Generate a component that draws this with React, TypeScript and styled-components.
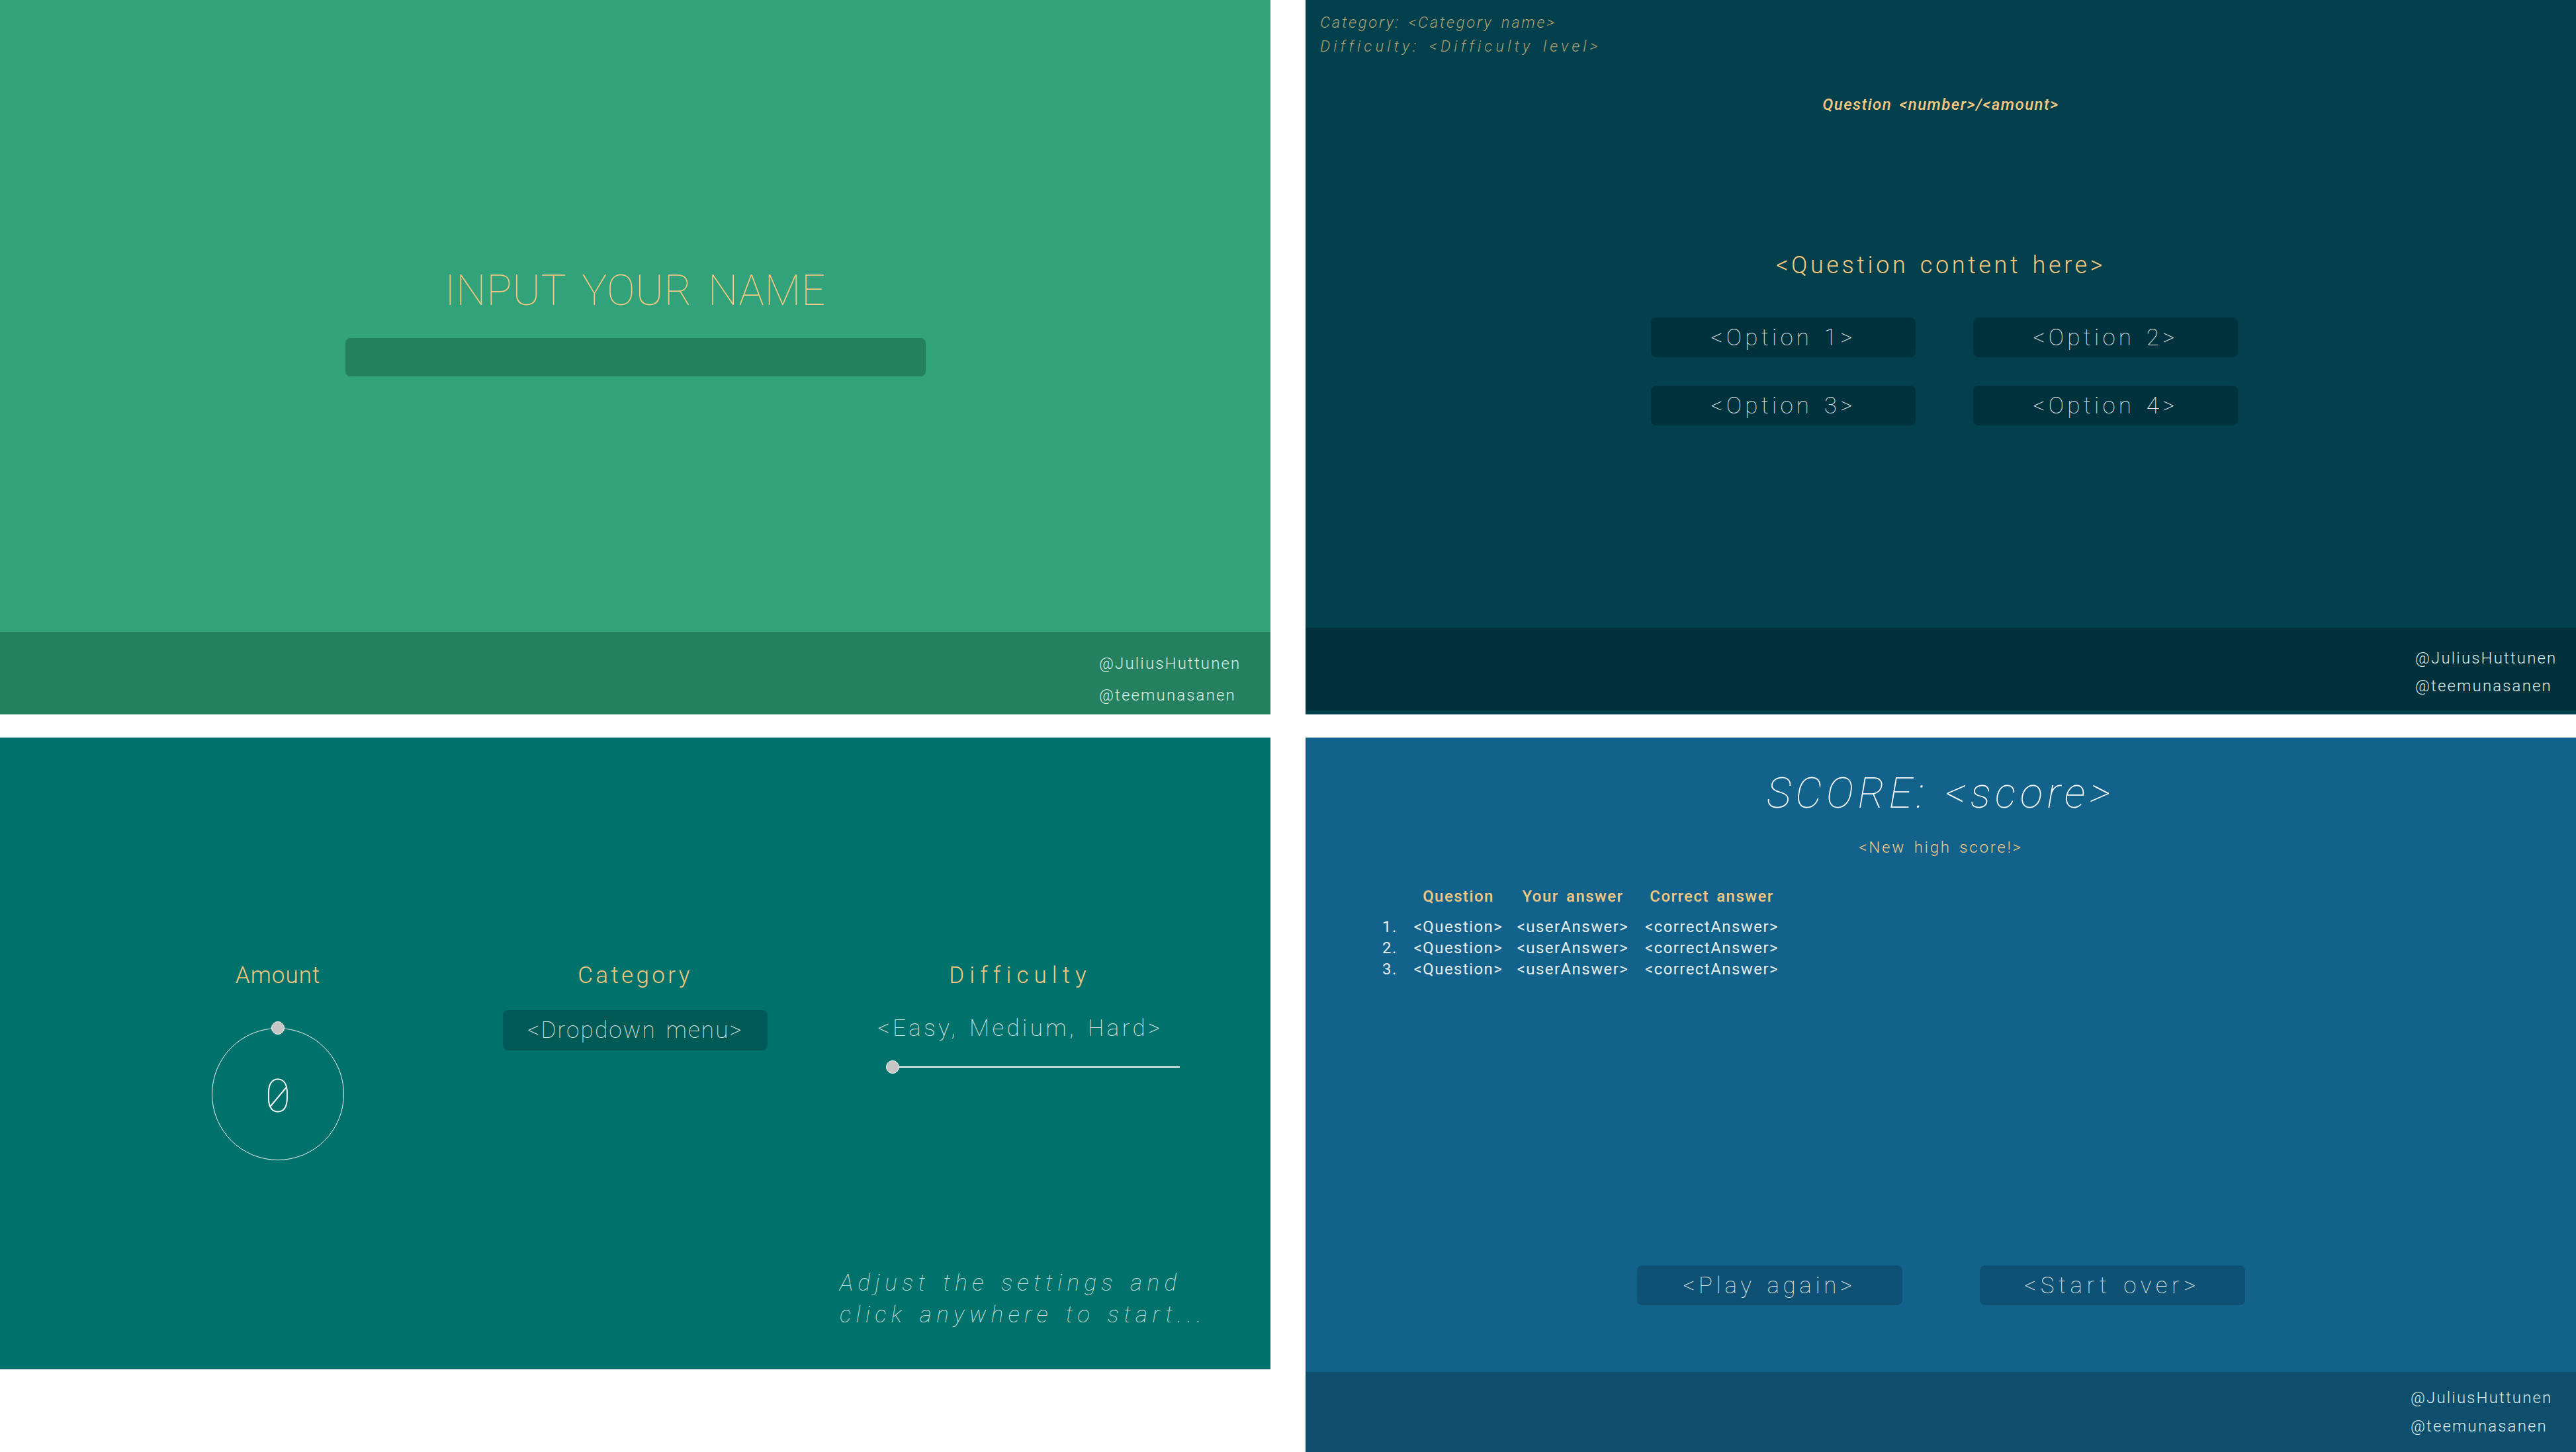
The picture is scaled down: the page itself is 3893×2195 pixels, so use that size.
import styled, { createGlobalStyle } from "styled-components";

const yellow = "#f6c87f";
const light = "#e3eded";

const GlobalStyle = createGlobalStyle`
  html, body {
    margin: 0;
    padding: 0;
    background: #ffffff;
  }
  body {
    font-family: Roboto, "Noto Sans", "Liberation Sans", sans-serif;
    font-weight: 300;
    letter-spacing: 1.6px;
    word-spacing: 4px;
  }
  * {
    box-sizing: border-box;
  }
`;

const Board = styled.div`
  display: grid;
  grid-template-columns: 1920px 1920px;
  grid-template-rows: 1080px 1080px;
  column-gap: 53px;
  row-gap: 35px;
  width: 3893px;
  height: 2195px;
  align-items: start;
`;

const Screen = styled.section<{ $bg: string; $h?: number }>`
  display: flex;
  flex-direction: column;
  height: ${(p) => p.$h ?? 1080}px;
  background: ${(p) => p.$bg};
  overflow: hidden;
`;

const Stage = styled.div<{ $top?: number; $center?: boolean }>`
  flex: 1;
  min-height: 0;
  display: flex;
  flex-direction: column;
  align-items: ${(p) => (p.$center ? "center" : "stretch")};
  padding-top: ${(p) => p.$top ?? 0}px;
`;

const Footer = styled.footer<{ $bg: string; $h: number; $inset: number; $top: number; $lh: number; $below?: number }>`
  flex: none;
  height: ${(p) => p.$h}px;
  margin-bottom: ${(p) => p.$below ?? 0}px;
  background: ${(p) => p.$bg};
  padding: ${(p) => p.$top}px 0 0 ${(p) => p.$inset}px;
  color: #dcebe6;
  font-size: 24px;
  font-weight: 300;
  line-height: ${(p) => p.$lh}px;
  letter-spacing: 0.09em;
`;

const Credits = ({ bg, h, inset, top, lh, below }: { bg: string; h: number; inset: number; top: number; lh: number; below?: number }) => (
  <Footer $bg={bg} $h={h} $inset={inset} $top={top} $lh={lh} $below={below}>
    <div>@JuliusHuttunen</div>
    <div>@teemunasanen</div>
  </Footer>
);

/* ---------- name screen ---------- */

const BigTitle = styled.h1`
  margin: 0;
  font-size: 64px;
  font-weight: 100;
  line-height: 78px;
  color: ${yellow};
  letter-spacing: 0.01em;
  word-spacing: 8px;
`;

const NameField = styled.input`
  margin-top: 32px;
  width: 877px;
  height: 58px;
  border: none;
  border-radius: 8px;
  background: #258060;
  outline: none;
`;

/* ---------- question screen ---------- */

const Meta = styled.div`
  padding: 16px 0 0 22px;
  font-size: 24px;
  line-height: 36px;
  font-style: italic;
  color: #a89e70;
`;

const MetaLine = styled.div<{ $track: number }>`
  letter-spacing: ${(p) => p.$track}em;
`;

const Counter = styled.div`
  margin-top: 52px;
  text-align: center;
  font-size: 24px;
  line-height: 36px;
  font-style: italic;
  font-weight: 500;
  color: ${yellow};
  letter-spacing: 0.06em;
`;

const QuestionText = styled.div`
  margin-top: 201px;
  text-align: center;
  font-size: 36px;
  line-height: 48px;
  color: ${yellow};
  letter-spacing: 0.128em;
`;

const OptionGrid = styled.div`
  margin-top: 55px;
  padding-left: 11px;
  display: grid;
  grid-template-columns: 400px 400px;
  column-gap: 87px;
  row-gap: 43px;
  justify-content: center;
`;

const Tile = styled.div<{ $bg: string; $w?: number; $track?: number }>`
  width: ${(p) => p.$w ?? 400}px;
  height: 60px;
  border-radius: 8px;
  background: ${(p) => p.$bg};
  display: flex;
  align-items: center;
  justify-content: center;
  color: ${light};
  font-size: 35px;
  font-weight: 100;
  letter-spacing: ${(p) => p.$track ?? 0.1}em;
  white-space: nowrap;
`;

/* ---------- settings screen ---------- */

const SettingsRow = styled.div`
  display: grid;
  grid-template-columns: 400px 400px 484px;
  column-gap: 140px;
  padding-left: 220px;
`;

const Setting = styled.div`
  display: flex;
  flex-direction: column;
  align-items: center;
`;

const SettingLabel = styled.div<{ $track: number }>`
  font-size: 35px;
  line-height: 48px;
  color: ${yellow};
  letter-spacing: ${(p) => p.$track}em;
`;

const Dial = styled.div`
  position: relative;
  margin-top: 55px;
  width: 200px;
  height: 200px;
  border: 1.5px solid #eef4f3;
  border-radius: 50%;
  display: flex;
  align-items: center;
  justify-content: center;
`;

const Knob = styled.span<{ $left?: string; $top?: string }>`
  position: absolute;
  left: ${(p) => p.$left ?? "50%"};
  top: ${(p) => p.$top ?? "-11px"};
  width: 20px;
  height: 20px;
  margin-left: -10px;
  border-radius: 50%;
  background: #c6c6c6;
  border: 1px solid #ffffff;
`;

const DialValue = styled.span`
  position: relative;
  top: 3px;
  font-size: 70px;
  font-weight: 100;
  line-height: 1;
  color: #ffffff;
  letter-spacing: 0;

  &::after {
    content: "";
    position: absolute;
    left: 50%;
    top: 50%;
    width: 1.5px;
    height: 38px;
    background: #ffffff;
    transform: translate(-50%, -46%) rotate(40deg);
  }
`;

const Dropdown = styled(Tile)`
  margin-top: 28px;
  height: 61px;
`;

const LevelText = styled.div`
  margin-top: 32px;
  font-size: 35px;
  font-weight: 100;
  line-height: 48px;
  color: ${light};
  letter-spacing: 0.126em;
  white-space: nowrap;
`;

const Slider = styled.div`
  position: relative;
  align-self: flex-start;
  margin: 24px 0 0 49px;
  width: 434px;
  height: 20px;

  &::before {
    content: "";
    position: absolute;
    left: 0;
    right: 0;
    top: 9px;
    height: 2px;
    background: #ffffff;
  }
`;

const Hint = styled.div`
  margin: auto 0 0 1269px;
  padding-bottom: 58px;
  font-size: 35px;
  font-weight: 100;
  line-height: 48px;
  font-style: italic;
  color: #d3e6e2;
  letter-spacing: 0.21em;
  white-space: nowrap;
`;

/* ---------- score screen ---------- */

const ScoreTitle = styled.h2`
  margin: 0;
  font-size: 64px;
  font-weight: 100;
  font-style: italic;
  line-height: 80px;
  color: #ffffff;
  letter-spacing: 0.1em;
`;

const HighScore = styled.div`
  margin-top: 25px;
  font-size: 24px;
  line-height: 32px;
  color: ${yellow};
  letter-spacing: 0.115em;
`;

const ResultTable = styled.div`
  align-self: flex-start;
  margin: 42px 0 0 116px;
  font-size: 24px;
  line-height: 32px;
`;

const ResultRow = styled.div<{ $head?: boolean }>`
  display: grid;
  grid-template-columns: 40px 150px 196px 224px;
  color: ${(p) => (p.$head ? yellow : light)};
  font-weight: ${(p) => (p.$head ? 500 : 400)};
  margin-bottom: ${(p) => (p.$head ? 14 : 0)}px;
  letter-spacing: 0.06em;
  white-space: nowrap;
`;

const Cell = styled.span<{ $left?: boolean }>`
  text-align: ${(p) => (p.$left ? "left" : "center")};
`;

const ButtonRow = styled.div`
  margin-top: auto;
  padding-bottom: 101px;
  display: flex;
  gap: 117px;
  justify-content: center;
`;

const rows = [1, 2, 3];

export default function App() {
  return (
    <>
      <GlobalStyle />
      <Board>
        {/* name input */}
        <Screen $bg="#32a27a">
          <Stage $center $top={401}>
            <BigTitle>INPUT YOUR NAME</BigTitle>
            <NameField aria-label="name" />
          </Stage>
          <Credits bg="#258060" h={125} inset={1661} top={24} lh={48} />
        </Screen>

        {/* question */}
        <Screen $bg="#01404c">
          <Stage>
            <Meta>
              <MetaLine $track={0.11}>Category: &lt;Category name&gt;</MetaLine>
              <MetaLine $track={0.21}>Difficulty: &lt;Difficulty level&gt;</MetaLine>
            </Meta>
            <Counter>Question &lt;number&gt;/&lt;amount&gt;</Counter>
            <QuestionText>&lt;Question content here&gt;</QuestionText>
            <OptionGrid>
              {[1, 2, 3, 4].map((n) => (
                <Tile key={n} $bg="#00323e" $track={0.149}>
                  &lt;Option {n}&gt;
                </Tile>
              ))}
            </OptionGrid>
          </Stage>
          <Credits bg="#00313d" h={125} inset={1677} top={25} lh={42} below={6} />
        </Screen>

        {/* settings */}
        <Screen $bg="#00716b" $h={955}>
          <Stage $top={336}>
            <SettingsRow>
              <Setting>
                <SettingLabel $track={0.03}>Amount</SettingLabel>
                <Dial>
                  <Knob />
                  <DialValue>0</DialValue>
                </Dial>
              </Setting>
              <Setting>
                <SettingLabel $track={0.125}>Category</SettingLabel>
                <Dropdown $bg="#015a56" $track={0.063}>
                  &lt;Dropdown menu&gt;
                </Dropdown>
              </Setting>
              <Setting>
                <SettingLabel $track={0.23}>Difficulty</SettingLabel>
                <LevelText>&lt;Easy, Medium, Hard&gt;</LevelText>
                <Slider>
                  <Knob $left="0px" $top="0px" />
                </Slider>
              </Setting>
            </SettingsRow>
            <Hint>
              Adjust the settings and
              <br />
              click anywhere to start...
            </Hint>
          </Stage>
        </Screen>

        {/* score */}
        <Screen $bg="#13628b">
          <Stage $center $top={45}>
            <ScoreTitle>SCORE: &lt;score&gt;</ScoreTitle>
            <HighScore>&lt;New high score!&gt;</HighScore>
            <ResultTable>
              <ResultRow $head>
                <Cell />
                <Cell>Question</Cell>
                <Cell>Your answer</Cell>
                <Cell>Correct answer</Cell>
              </ResultRow>
              {rows.map((n) => (
                <ResultRow key={n}>
                  <Cell $left>{n}.</Cell>
                  <Cell>&lt;Question&gt;</Cell>
                  <Cell>&lt;userAnswer&gt;</Cell>
                  <Cell>&lt;correctAnswer&gt;</Cell>
                </ResultRow>
              ))}
            </ResultTable>
            <ButtonRow>
              <Tile $bg="#0f5174" $w={401} $track={0.16}>
                &lt;Play again&gt;
              </Tile>
              <Tile $bg="#0f5174" $w={401} $track={0.187}>
                &lt;Start over&gt;
              </Tile>
            </ButtonRow>
          </Stage>
          <Credits bg="#0f4e6d" h={121} inset={1670} top={18} lh={43} />
        </Screen>
      </Board>
    </>
  );
}
